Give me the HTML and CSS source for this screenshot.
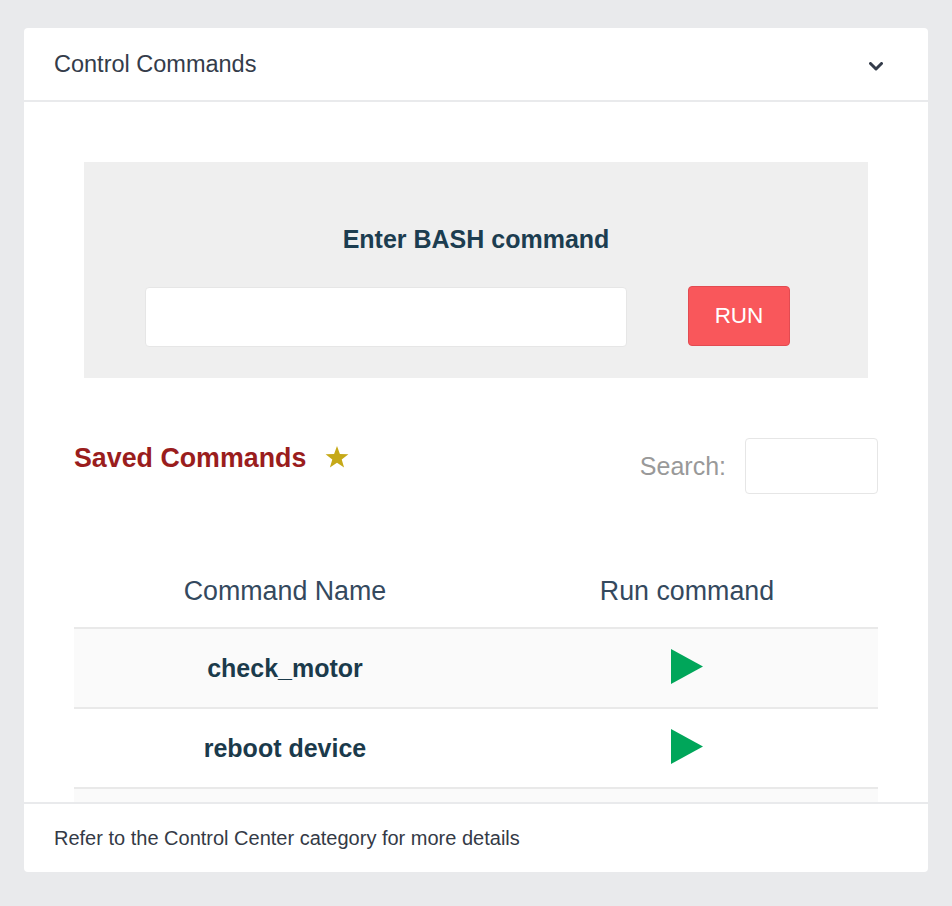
FILE: index.html
```html
<!DOCTYPE html>
<html>
<head>
<meta charset="utf-8">
<title>Control Commands</title>
<link rel="stylesheet" href="styles.css">
</head>
<body>
<div class="card">
  <div class="card-header">
    <span class="card-title">Control Commands</span>
    <svg class="chevron" width="14" height="9" viewBox="0 0 14 9"><polyline points="1.5,1.5 7,7 12.5,1.5" fill="none" stroke="#343c4a" stroke-width="3" stroke-linecap="round" stroke-linejoin="round"/></svg>
  </div>
  <div class="card-body">
    <div class="bash-box">
      <h3 class="bash-title">Enter BASH command</h3>
      <div class="bash-row">
        <input class="bash-input" type="text">
        <button class="run-btn">RUN</button>
      </div>
    </div>
    <div class="saved-head">
      <h2 class="saved-title">Saved Commands
        <svg class="star" width="24" height="22" viewBox="0 0 24 22"><polygon points="12,0 14.9,7.9 23.4,8.2 16.7,13.4 19.1,21.6 12,16.8 4.9,21.6 7.3,13.4 0.6,8.2 9.1,7.9" fill="#c6a918"/></svg>
      </h2>
      <label class="search">Search: <input class="search-input" type="text"></label>
    </div>
    <table class="cmd-table">
      <thead>
        <tr><th class="col-name">Command Name</th><th class="col-run">Run command</th></tr>
      </thead>
      <tbody>
        <tr class="odd"><td class="cmd-name">check_motor</td><td><svg class="play" width="32" height="35" viewBox="0 0 32 35"><polygon points="0,0 32,17.5 0,35" fill="#00a65a"/></svg></td></tr>
        <tr><td class="cmd-name">reboot device</td><td><svg class="play" width="32" height="35" viewBox="0 0 32 35"><polygon points="0,0 32,17.5 0,35" fill="#00a65a"/></svg></td></tr>
        <tr class="odd"><td class="cmd-name"></td><td></td></tr>
      </tbody>
    </table>
  </div>
  <div class="card-footer">Refer to the Control Center category for more details</div>
</div>
</body>
</html>
```
FILE: styles.css
```css
html, body {
  margin: 0;
  padding: 0;
  background: #e9eaec;
  font-family: "Liberation Sans", Arial, Helvetica, sans-serif;
}

body {
  padding: 28px 24px 0;
}

.card {
  width: 904px;
  height: 844px;
  background: #ffffff;
  border-radius: 4px;
  overflow: hidden;
}

.card-header {
  height: 72px;
  border-bottom: 2px solid #e9eaec;
  display: flex;
  align-items: center;
  justify-content: space-between;
  padding: 0 45px 0 30px;
}

.card-title {
  font-size: 23.5px;
  color: #343c4a;
}

.chevron {
  display: block;
  margin-top: 5px;
}

.card-body {
  height: 700px;
  overflow: hidden;
  padding: 60px 50px 0;
  box-sizing: border-box;
}

.bash-box {
  margin: 0 10px;
  background: #efefef;
  padding: 62px 0 31px;
  text-align: center;
}

.bash-title {
  margin: 0 0 33px;
  font-size: 25px;
  line-height: 30px;
  font-weight: bold;
  color: #1c3d50;
}

.bash-row {
  display: flex;
  align-items: flex-start;
  padding-left: 61px;
  gap: 61px;
}

.bash-input {
  width: 482px;
  height: 60px;
  box-sizing: border-box;
  border: 1px solid #e6e6e6;
  border-radius: 4px;
  background: #fff;
  margin: 0;
}

.run-btn {
  width: 102px;
  height: 60px;
  margin-top: -1px;
  box-sizing: border-box;
  background: #f9575b;
  border: 1px solid #e24b51;
  border-radius: 4px;
  color: #fff;
  font-family: "Liberation Sans", Arial, sans-serif;
  font-size: 22.5px;
  padding: 0;
}

.saved-head {
  margin-top: 60px;
  display: flex;
  justify-content: space-between;
  align-items: flex-start;
}

.saved-title {
  margin: 0;
  font-size: 26.8px;
  line-height: 40px;
  font-weight: bold;
  color: #9a1d1d;
  display: flex;
  align-items: center;
}

.star {
  margin-left: 19px;
  margin-top: -3px;
}

.search {
  display: flex;
  align-items: center;
  gap: 19px;
  font-size: 25px;
  color: #999999;
  line-height: 52px;
}

.search-input {
  width: 133px;
  height: 56px;
  box-sizing: border-box;
  border: 1px solid #e6e6e6;
  border-radius: 4px;
  margin: 0;
}

.cmd-table {
  margin-top: 62px;
  width: 100%;
  border-collapse: collapse;
  table-layout: fixed;
}

.col-name {
  width: 422px;
}

.cmd-table th {
  padding: 20px 0;
  line-height: 31px;
  font-size: 26.8px;
  font-weight: normal;
  color: #34495e;
  text-align: center;
  border-bottom: 2px solid #e9e9e9;
}

.cmd-table td {
  height: 78px;
  padding: 0;
  text-align: center;
  vertical-align: middle;
  border-bottom: 2px solid #e9e9e9;
}

.cmd-table tr.odd td {
  background: #fafafa;
}

.cmd-name {
  font-size: 25px;
  font-weight: bold;
  color: #1b3a4b;
}

.play {
  display: block;
  margin: -3px auto 0;
}

.card-footer {
  height: 68px;
  border-top: 2px solid #e9eaec;
  display: flex;
  align-items: center;
  padding-left: 30px;
  font-size: 20px;
  color: #343a46;
}
```
